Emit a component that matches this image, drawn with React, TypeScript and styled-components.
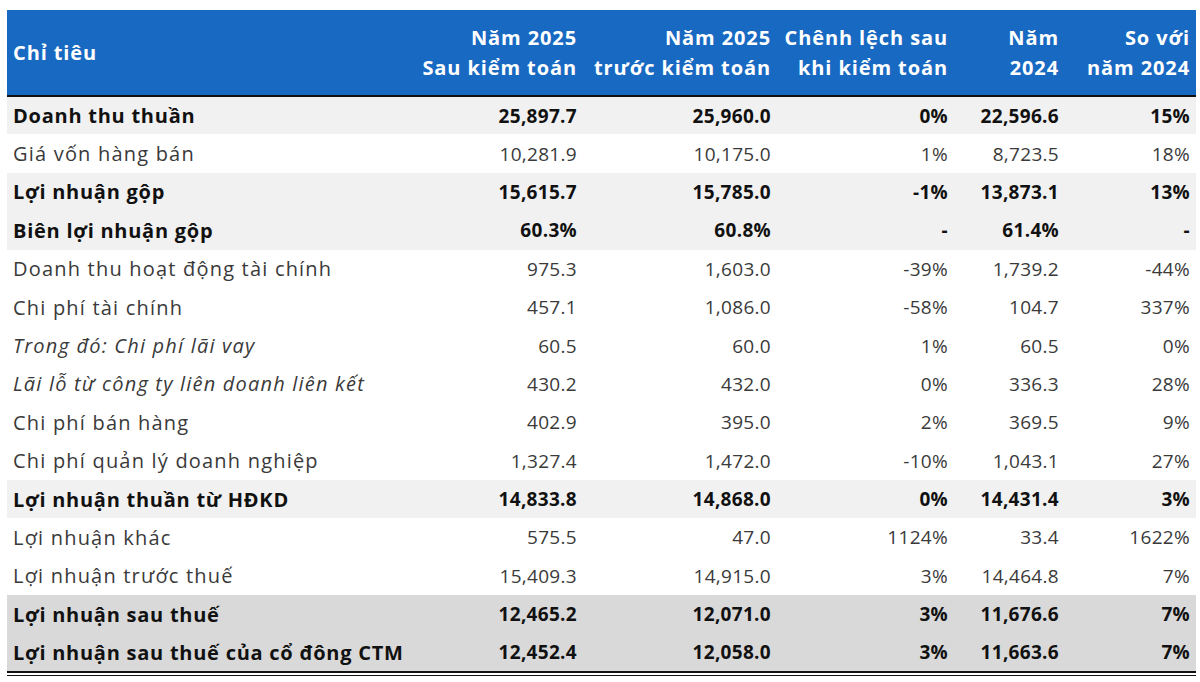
import React from 'react';
import styled, { createGlobalStyle } from 'styled-components';

const GlobalStyle = createGlobalStyle`
  html, body { margin: 0; padding: 0; background: #ffffff; }
  body { font-family: "Open Sans", "Noto Sans", sans-serif; }
`;

const Page = styled.div`
  padding: 10px 4px 0 7px;
  width: 1189px;
`;

const Frame = styled.div`
  border-bottom: 1px solid #111;
  padding-bottom: 2px;
`;

const Table = styled.table`
  width: 100%;
  border-collapse: collapse;
  table-layout: fixed;
  font-size: 19px;
`;

const HeadCell = styled.th<{ $left?: boolean }>`
  background: #1769c2;
  color: #ffffff;
  font-size: 20px;
  font-weight: 700;
  letter-spacing: 0.9px;
  text-align: ${(p) => (p.$left ? 'left' : 'right')};
  vertical-align: middle;
  line-height: 30px;
  height: 85px;
  padding: 0 6px;
  border-bottom: 2px solid #111;
  white-space: nowrap;
`;

type Tone = 'plain' | 'light' | 'dark';

const Row = styled.tr<{ $tone: Tone; $bold?: boolean; $last?: boolean }>`
  height: 38.4px;
  background: ${(p) => (p.$tone === 'dark' ? '#d9d9d9' : p.$tone === 'light' ? '#f1f1f1' : '#ffffff')};
  color: ${(p) => (p.$bold ? '#111111' : '#3a3a3a')};
  font-weight: ${(p) => (p.$bold ? 700 : 400)};

  td { border-bottom: ${(p) => (p.$last ? '2px solid #111' : 'none')}; }
`;

const Label = styled.td<{ $italic?: boolean; $bold?: boolean }>`
  padding: 0 6px;
  text-align: left;
  font-size: 20px;
  letter-spacing: ${(p) => (p.$bold ? '0.75px' : '1.2px')};
  font-style: ${(p) => (p.$italic ? 'italic' : 'normal')};
  white-space: nowrap;
`;

const Num = styled.td`
  padding: 0 6px;
  text-align: right;
  letter-spacing: 0.3px;
  white-space: nowrap;
`;

type Item = { label: string; v: string[]; tone: Tone; bold?: boolean; italic?: boolean };

const ROWS: Item[] = [
  { label: 'Doanh thu thuần', v: ['25,897.7', '25,960.0', '0%', '22,596.6', '15%'], tone: 'light', bold: true },
  { label: 'Giá vốn hàng bán', v: ['10,281.9', '10,175.0', '1%', '8,723.5', '18%'], tone: 'plain' },
  { label: 'Lợi nhuận gộp', v: ['15,615.7', '15,785.0', '-1%', '13,873.1', '13%'], tone: 'light', bold: true },
  { label: 'Biên lợi nhuận gộp', v: ['60.3%', '60.8%', '-', '61.4%', '-'], tone: 'light', bold: true },
  { label: 'Doanh thu hoạt động tài chính', v: ['975.3', '1,603.0', '-39%', '1,739.2', '-44%'], tone: 'plain' },
  { label: 'Chi phí tài chính', v: ['457.1', '1,086.0', '-58%', '104.7', '337%'], tone: 'plain' },
  { label: 'Trong đó: Chi phí lãi vay', v: ['60.5', '60.0', '1%', '60.5', '0%'], tone: 'plain', italic: true },
  { label: 'Lãi lỗ từ công ty liên doanh liên kết', v: ['430.2', '432.0', '0%', '336.3', '28%'], tone: 'plain', italic: true },
  { label: 'Chi phí bán hàng', v: ['402.9', '395.0', '2%', '369.5', '9%'], tone: 'plain' },
  { label: 'Chi phí quản lý doanh nghiệp', v: ['1,327.4', '1,472.0', '-10%', '1,043.1', '27%'], tone: 'plain' },
  { label: 'Lợi nhuận thuần từ HĐKD', v: ['14,833.8', '14,868.0', '0%', '14,431.4', '3%'], tone: 'light', bold: true },
  { label: 'Lợi nhuận khác', v: ['575.5', '47.0', '1124%', '33.4', '1622%'], tone: 'plain' },
  { label: 'Lợi nhuận trước thuế', v: ['15,409.3', '14,915.0', '3%', '14,464.8', '7%'], tone: 'plain' },
  { label: 'Lợi nhuận sau thuế', v: ['12,465.2', '12,071.0', '3%', '11,676.6', '7%'], tone: 'dark', bold: true },
  { label: 'Lợi nhuận sau thuế của cổ đông CTM', v: ['12,452.4', '12,058.0', '3%', '11,663.6', '7%'], tone: 'dark', bold: true },
];

export default function App() {
  return (
    <>
      <GlobalStyle />
      <Page>
        <Frame>
          <Table>
            <colgroup>
              <col style={{ width: 393 }} />
              <col style={{ width: 183 }} />
              <col style={{ width: 194 }} />
              <col style={{ width: 177 }} />
              <col style={{ width: 111 }} />
              <col style={{ width: 131 }} />
            </colgroup>
            <thead>
              <tr>
                <HeadCell $left>Chỉ tiêu</HeadCell>
                <HeadCell>Năm 2025<br />Sau kiểm toán</HeadCell>
                <HeadCell>Năm 2025<br />trước kiểm toán</HeadCell>
                <HeadCell>Chênh lệch sau<br />khi kiểm toán</HeadCell>
                <HeadCell>Năm<br />2024</HeadCell>
                <HeadCell>So với<br />năm 2024</HeadCell>
              </tr>
            </thead>
            <tbody>
              {ROWS.map((r, i) => (
                <Row key={r.label} $tone={r.tone} $bold={r.bold} $last={i === ROWS.length - 1}>
                  <Label $italic={r.italic} $bold={r.bold}>{r.label}</Label>
                  {r.v.map((x, j) => (
                    <Num key={j}>{x}</Num>
                  ))}
                </Row>
              ))}
            </tbody>
          </Table>
        </Frame>
      </Page>
    </>
  );
}
